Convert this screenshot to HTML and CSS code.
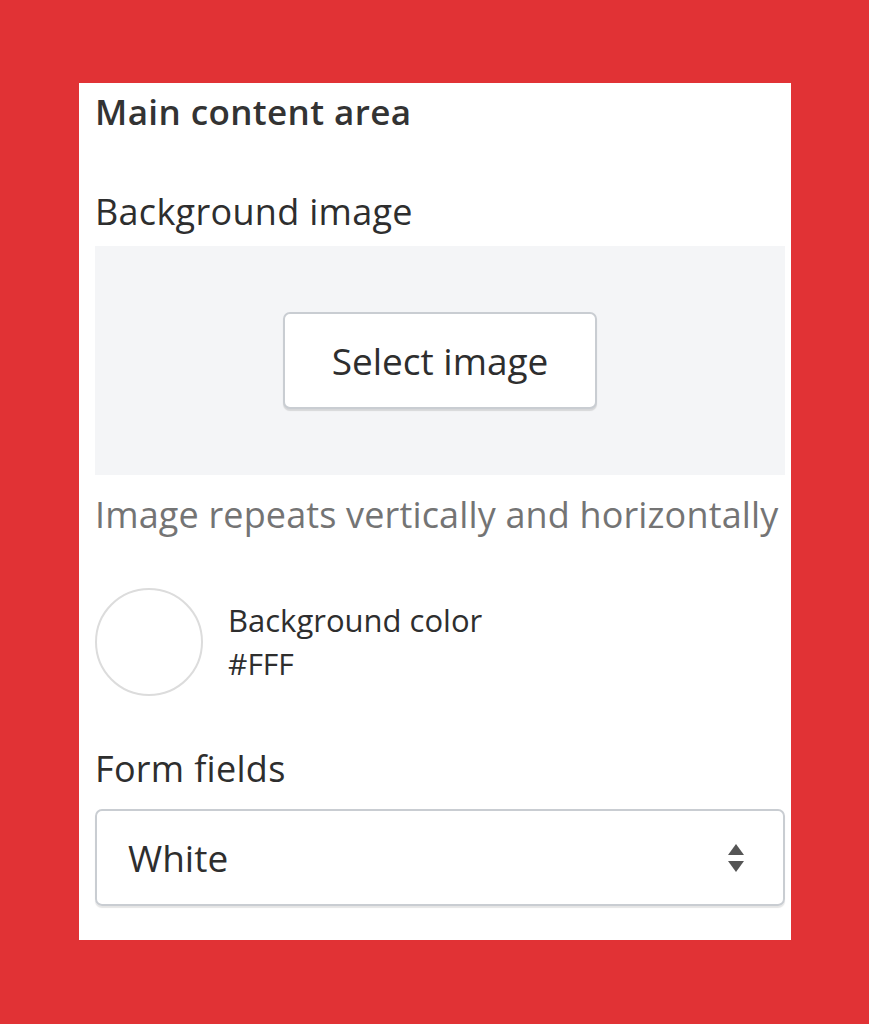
FILE: index.html
```html
<!DOCTYPE html>
<html lang="en">
<head>
<meta charset="utf-8">
<title>Main content area</title>
<link rel="stylesheet" href="styles.css">
</head>
<body>
<div class="panel">
  <h2 class="title">Main content area</h2>
  <div class="label label-image">Background image</div>
  <div class="dropzone">
    <button class="btn" type="button">Select image</button>
  </div>
  <p class="help">Image repeats vertically and horizontally</p>
  <div class="color-row">
    <span class="swatch"></span>
    <div class="color-text">
      <div class="color-name">Background color</div>
      <div class="color-value">#FFF</div>
    </div>
  </div>
  <div class="label label-form">Form fields</div>
  <div class="select">
    <span class="select-value">White</span>
    <svg class="select-arrows" width="18" height="28" viewBox="0 0 18 28" aria-hidden="true">
      <path d="M9 0 L17 11 L1 11 Z" fill="#555"/>
      <path d="M1 17 L17 17 L9 28 Z" fill="#555"/>
    </svg>
  </div>
</div>
</body>
</html>
```

FILE: styles.css
```css
html, body {
  margin: 0;
  padding: 0;
}
body {
  background: #e13235;
  width: 869px;
  height: 1024px;
  padding: 83px 0 0 79px;
  box-sizing: border-box;
  font-family: "Open Sans", "Noto Sans", sans-serif;
  color: #2e2e2e;
}
.panel {
  background: #fff;
  width: 712px;
  height: 857px;
  box-sizing: border-box;
  padding: 5px 6px 0 16px;
  display: flex;
  flex-direction: column;
}
.title {
  margin: 0;
  font-size: 35px;
  font-weight: 600;
  line-height: 48px;
  letter-spacing: 0.4px;
  color: #333;
}
.label {
  font-size: 36px;
  line-height: 48px;
  font-weight: 400;
  letter-spacing: 0.3px;
}
.label-image {
  margin-top: 52px;
}
.dropzone {
  margin-top: 10px;
  height: 229px;
  background: #f4f5f7;
  display: flex;
  align-items: center;
  justify-content: center;
}
.btn {
  width: 314px;
  height: 97px;
  border: 2px solid #c9cdd2;
  border-radius: 7px;
  background: #fff;
  box-shadow: 0 2px 1px rgba(0,0,0,0.12);
  font-family: inherit;
  font-size: 37px;
  line-height: 48px;
  color: #2e2e2e;
  padding: 0;
}
.help {
  margin: 16px 0 0;
  font-size: 36px;
  line-height: 48px;
  color: #747474;
  letter-spacing: 0.15px;
}
.color-row {
  margin-top: 49px;
  display: flex;
  align-items: center;
  gap: 25px;
}
.swatch {
  width: 104px;
  height: 104px;
  border: 2px solid #dcdcdc;
  border-radius: 50%;
  background: #fff;
  flex: none;
}
.color-text {
  display: flex;
  flex-direction: column;
}
.color-name {
  font-size: 31px;
  line-height: 44px;
  font-weight: 500;
}
.color-value {
  font-size: 30px;
  line-height: 44px;
}
.label-form {
  margin-top: 49px;
}
.select {
  margin-top: 16px;
  height: 97px;
  box-sizing: border-box;
  border: 2px solid #c9cdd2;
  border-radius: 7px;
  box-shadow: 0 2px 1px rgba(0,0,0,0.1);
  display: flex;
  align-items: center;
  justify-content: space-between;
  padding: 0 38px 0 31px;
}
.select-value {
  font-size: 37px;
  line-height: 48px;
}
.select-arrows {
  display: block;
}
```
